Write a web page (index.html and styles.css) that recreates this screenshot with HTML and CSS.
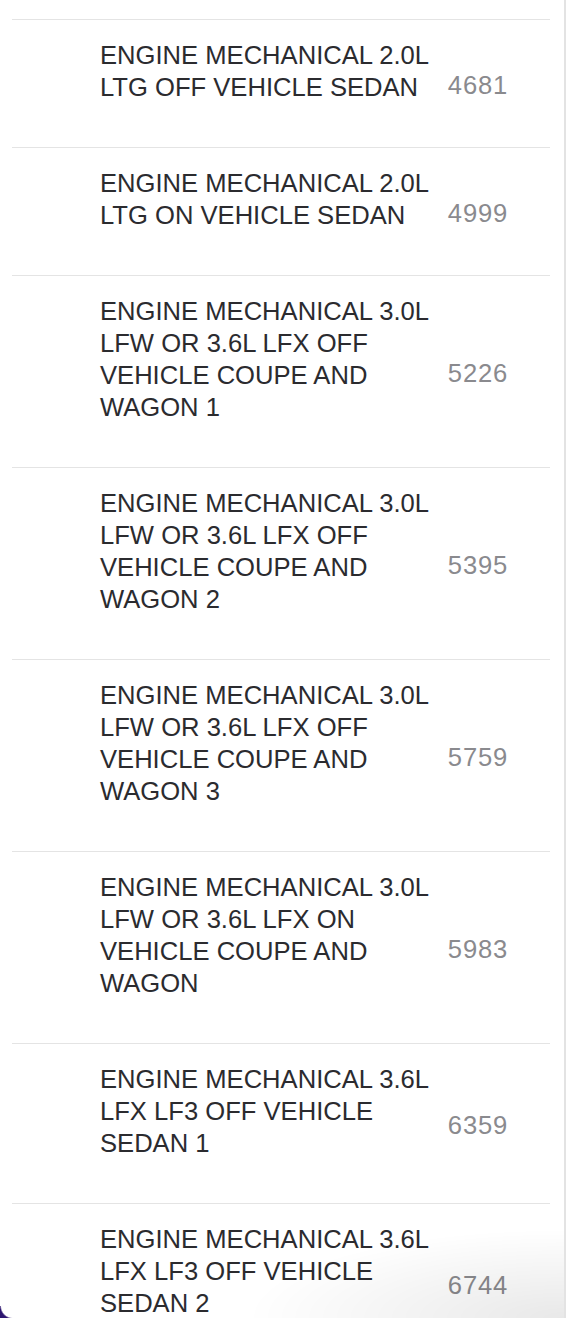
FILE: index.html
```html
<!DOCTYPE html>
<html lang="en">
<head>
  <meta charset="UTF-8">
  <title>Service Manual Sections</title>
  <link rel="stylesheet" href="styles.css">
</head>
<body>
  <div class="list">
    <div class="item">
      <div class="title">ENGINE MECHANICAL 2.0L LTG OFF VEHICLE SEDAN</div>
      <div class="page">4681</div>
    </div>
    <div class="item">
      <div class="title">ENGINE MECHANICAL 2.0L LTG ON VEHICLE SEDAN</div>
      <div class="page">4999</div>
    </div>
    <div class="item">
      <div class="title">ENGINE MECHANICAL 3.0L LFW OR 3.6L LFX OFF VEHICLE COUPE AND WAGON 1</div>
      <div class="page">5226</div>
    </div>
    <div class="item">
      <div class="title">ENGINE MECHANICAL 3.0L LFW OR 3.6L LFX OFF VEHICLE COUPE AND WAGON 2</div>
      <div class="page">5395</div>
    </div>
    <div class="item">
      <div class="title">ENGINE MECHANICAL 3.0L LFW OR 3.6L LFX OFF VEHICLE COUPE AND WAGON 3</div>
      <div class="page">5759</div>
    </div>
    <div class="item">
      <div class="title">ENGINE MECHANICAL 3.0L LFW OR 3.6L LFX ON VEHICLE COUPE AND WAGON</div>
      <div class="page">5983</div>
    </div>
    <div class="item">
      <div class="title">ENGINE MECHANICAL 3.6L LFX LF3 OFF VEHICLE SEDAN 1</div>
      <div class="page">6359</div>
    </div>
    <div class="item">
      <div class="title">ENGINE MECHANICAL 3.6L LFX LF3 OFF VEHICLE SEDAN 2</div>
      <div class="page">6744</div>
    </div>
  </div>

  <div class="edge"></div>
  <div class="shade"></div>
  <div class="corner"></div>
</body>
</html>
```

FILE: styles.css
```css
html, body {
  height: 1318px;
  overflow: hidden;
}

body {
  margin: 0;
  background: white;
  font-family: 'Liberation Sans', Arial, sans-serif;
  color: #2b2b2f;
}

.list {
  margin: 19px 16px 0 12px;
}

.item {
  display: flex;
  align-items: center;
  border-top: 1px solid #e4e4e4;
  padding: 0 43px 0 88px;
}

.title {
  flex: 1;
  max-width: 345px;
  padding: 19px 0 44px;
  font-size: 25.6px;
  line-height: 32px;
}

.page {
  margin-left: auto;
  margin-right: -1px;
  padding-top: 4px;
  font-size: 25.6px;
  letter-spacing: 0.8px;
  color: #8a8a8e;
}

.edge {
  position: fixed;
  top: 0;
  right: 0;
  width: 2px;
  height: 100%;
  background: #e3e3e3;
}

.shade {
  position: fixed;
  right: 2px;
  bottom: 0;
  width: 320px;
  height: 90px;
  background: radial-gradient(ellipse at 100% 100%, rgba(0,0,0,0.09), rgba(0,0,0,0) 70%);
  pointer-events: none;
}

.corner {
  position: fixed;
  left: 0;
  bottom: 0;
  width: 13px;
  height: 12px;
  background: radial-gradient(circle at 13px 0, rgba(46,22,112,0) 11.5px, #2e1670 13px);
}
```
